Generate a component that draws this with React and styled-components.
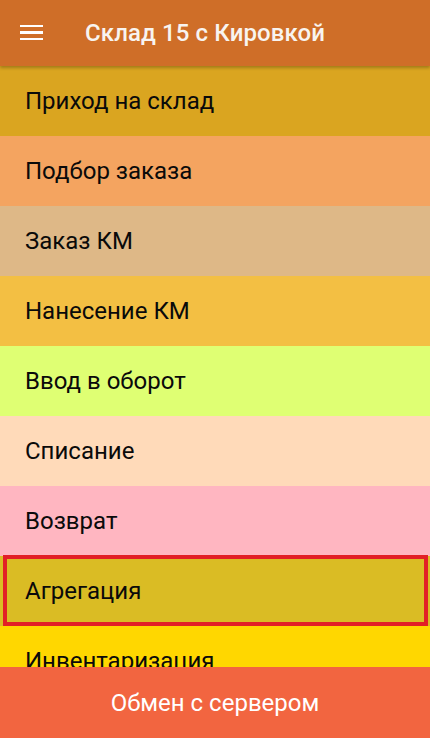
import React from "react";
import styled, { createGlobalStyle } from "styled-components";

const GlobalStyle = createGlobalStyle`
  html, body {
    margin: 0;
    padding: 0;
    background: #ffffff;
    font-family: Roboto, "Noto Sans", sans-serif;
  }
`;

const Screen = styled.div`
  width: 430px;
  height: 738px;
  display: flex;
  flex-direction: column;
  overflow: hidden;
  position: relative;
`;

const Toolbar = styled.header`
  height: 66px;
  flex-shrink: 0;
  background: #cf6e28;
  display: flex;
  align-items: center;
  padding-left: 20px;
  box-shadow: 0 2px 3px rgba(0, 0, 0, 0.25);
  position: relative;
  z-index: 2;
`;

const MenuButton = styled.div`
  width: 23px;
  display: flex;
  flex-direction: column;
  gap: 4px;
  margin-right: 42px;
  margin-top: -1px;

  span {
    display: block;
    height: 2.5px;
    background: #ffffff;
  }
`;

const Title = styled.h1`
  margin: 0;
  color: #f8f4f0;
  font-size: 24px;
  font-weight: 500;
  letter-spacing: 0.1px;
`;

const List = styled.div`
  flex: 1;
  overflow: hidden;
  display: flex;
  flex-direction: column;
`;

const Row = styled.div`
  height: 70px;
  flex-shrink: 0;
  background: ${(p) => p.bg};
  display: flex;
  align-items: center;
  padding-left: 25px;
  font-size: 24px;
  color: #0a0a0a;
  position: relative;

  ${(p) =>
    p.selected &&
    `
    &::after {
      content: "";
      position: absolute;
      left: 3px;
      right: 2px;
      top: -1px;
      bottom: 0;
      border: 4px solid #e21f26;
    }
  `}
`;

const Footer = styled.div`
  height: 71px;
  flex-shrink: 0;
  background: #f26540;
  color: #ffffff;
  font-size: 24px;
  display: flex;
  align-items: center;
  justify-content: center;
`;

const items = [
  { label: "Приход на склад", bg: "#daa520" },
  { label: "Подбор заказа", bg: "#f4a460" },
  { label: "Заказ КМ", bg: "#deb887" },
  { label: "Нанесение КМ", bg: "#f3bf43" },
  { label: "Ввод в оборот", bg: "#dfff73" },
  { label: "Списание", bg: "#ffdab9" },
  { label: "Возврат", bg: "#ffb6c1" },
  { label: "Агрегация", bg: "#dabc24", selected: true },
  { label: "Инвентаризация", bg: "#ffd700" },
];

export default function App() {
  return (
    <>
      <GlobalStyle />
      <Screen>
        <Toolbar>
          <MenuButton>
            <span />
            <span />
            <span />
          </MenuButton>
          <Title>Склад 15 с Кировкой</Title>
        </Toolbar>
        <List>
          {items.map((it) => (
            <Row key={it.label} bg={it.bg} selected={it.selected}>
              {it.label}
            </Row>
          ))}
        </List>
        <Footer>Обмен с сервером</Footer>
      </Screen>
    </>
  );
}
